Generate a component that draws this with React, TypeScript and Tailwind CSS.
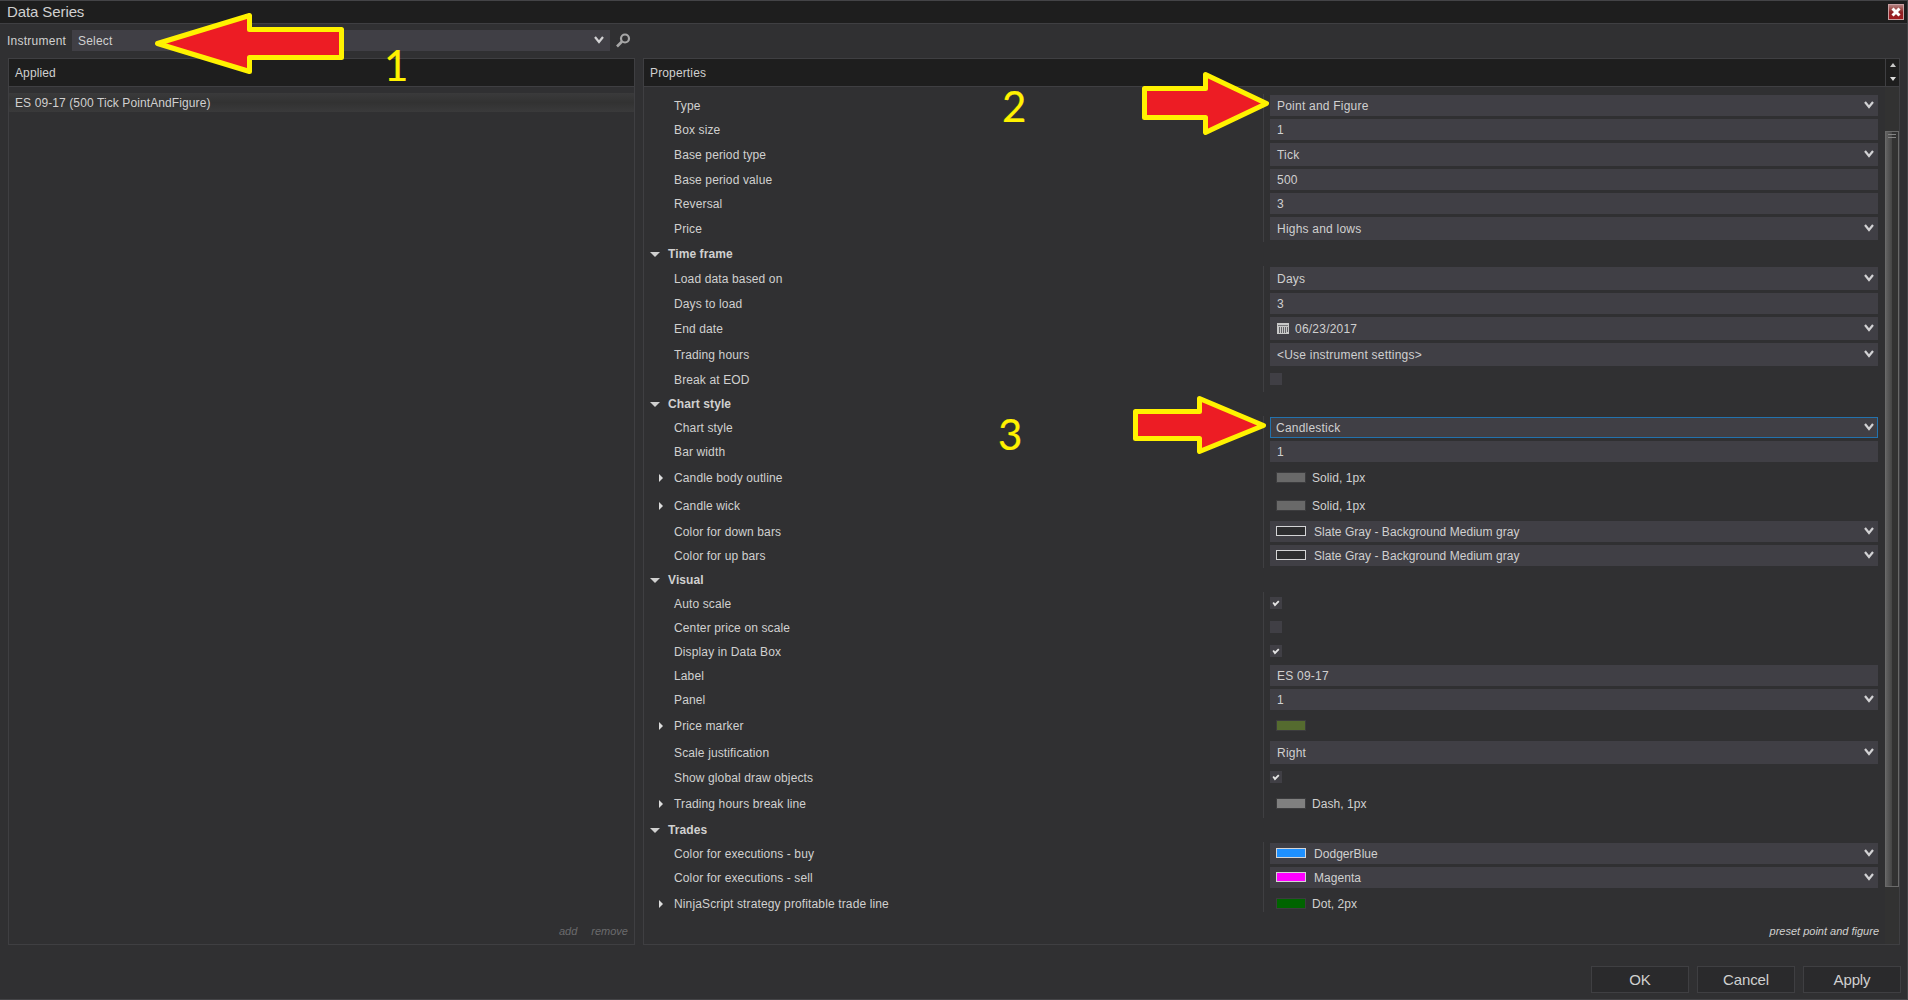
import type { ReactNode } from "react";

type RowKind = "select" | "input" | "check" | "swatch" | "group";

interface Row {
  kind: RowKind;
  label: string;
  h: string;
  value?: string;
  color?: string;
  checked?: boolean;
  focused?: boolean;
  icon?: boolean;
}

const rows: Row[] = [
  { kind: "select", label: "Type", h: "h-6", value: "Point and Figure" },
  { kind: "input", label: "Box size", h: "h-6", value: "1" },
  { kind: "select", label: "Base period type", h: "h-[26px]", value: "Tick" },
  { kind: "input", label: "Base period value", h: "h-6", value: "500" },
  { kind: "input", label: "Reversal", h: "h-6", value: "3" },
  { kind: "select", label: "Price", h: "h-[26px]", value: "Highs and lows" },
  { kind: "group", label: "Time frame", h: "h-6" },
  { kind: "select", label: "Load data based on", h: "h-[26px]", value: "Days" },
  { kind: "input", label: "Days to load", h: "h-6", value: "3" },
  { kind: "select", label: "End date", h: "h-[26px]", value: "06/23/2017", icon: true },
  { kind: "select", label: "Trading hours", h: "h-[26px]", value: "<Use instrument settings>" },
  { kind: "check", label: "Break at EOD", h: "h-6" },
  { kind: "group", label: "Chart style", h: "h-6" },
  { kind: "select", label: "Chart style", h: "h-6", value: "Candlestick", focused: true },
  { kind: "input", label: "Bar width", h: "h-6", value: "1" },
  { kind: "swatch", label: "Candle body outline", h: "h-7", value: "Solid, 1px", color: "bg-[#696969]" },
  { kind: "swatch", label: "Candle wick", h: "h-7", value: "Solid, 1px", color: "bg-[#696969]" },
  { kind: "select", label: "Color for down bars", h: "h-6", value: "Slate Gray - Background Medium gray", color: "bg-[#2d2d2f]" },
  { kind: "select", label: "Color for up bars", h: "h-6", value: "Slate Gray - Background Medium gray", color: "bg-[#2d2d2f]" },
  { kind: "group", label: "Visual", h: "h-6" },
  { kind: "check", label: "Auto scale", h: "h-6", checked: true },
  { kind: "check", label: "Center price on scale", h: "h-6" },
  { kind: "check", label: "Display in Data Box", h: "h-6", checked: true },
  { kind: "input", label: "Label", h: "h-6", value: "ES 09-17" },
  { kind: "select", label: "Panel", h: "h-6", value: "1" },
  { kind: "swatch", label: "Price marker", h: "h-7", color: "bg-[#556b2f]" },
  { kind: "select", label: "Scale justification", h: "h-[26px]", value: "Right" },
  { kind: "check", label: "Show global draw objects", h: "h-6", checked: true },
  { kind: "swatch", label: "Trading hours break line", h: "h-7", value: "Dash, 1px", color: "bg-[#808080]" },
  { kind: "group", label: "Trades", h: "h-6" },
  { kind: "select", label: "Color for executions - buy", h: "h-6", value: "DodgerBlue", color: "bg-[#1e90ff]" },
  { kind: "select", label: "Color for executions - sell", h: "h-6", value: "Magenta", color: "bg-[#ff00ff]" },
  { kind: "swatch", label: "NinjaScript strategy profitable trade line", h: "h-7", value: "Dot, 2px", color: "bg-[#006400]" },
];

function Chevron() {
  return (
    <svg className="mb-px shrink-0" width="10" height="8" viewBox="0 0 10 8" fill="none">
      <path d="M1 1 L5 6 L9 1" stroke="#d2d2d4" strokeWidth="2.2" />
    </svg>
  );
}

function Calendar() {
  return (
    <svg className="mr-1.5 shrink-0" width="12" height="11" viewBox="0 0 12 11" shapeRendering="crispEdges">
      <rect width="12" height="11" fill="#c8c8c8" />
      <rect x="1" y="2" width="10" height="1" fill="#77777a" />
      <path d="M2 4h1v6h-1zM4 4h1v6h-1zM6 4h1v6h-1zM8 4h1v6h-1zM10 4h1v5h-1z" fill="#626266" />
    </svg>
  );
}

function Value({ row }: { row: Row }) {
  if (row.kind === "check") {
    return (
      <div className="mt-[5px] flex h-3 w-3 items-center justify-center bg-[#403f45]">
        {row.checked && (
          <svg width="8" height="7" viewBox="0 0 8 7" fill="none">
            <path d="M1.2 2.4 L3 5 L6.8 1.2" stroke="#e4e4e4" strokeWidth="1.8" />
          </svg>
        )}
      </div>
    );
  }
  if (row.kind === "swatch") {
    return (
      <div className="flex h-7 items-center pl-[7px]">
        <div className={`mb-px h-[9px] w-7 outline-1 outline-[#3c3c3e] ${row.color}`} />
        <span className="ml-[7px] tracking-[0.05px]">{row.value}</span>
      </div>
    );
  }
  return (
    <div
      className={`mt-px mb-0.5 flex flex-1 items-center bg-[#403f45] pr-1 ${
        row.focused ? "pl-1.5 outline-1 -outline-offset-1 outline-[#2372ad]" : row.color ? "pl-1.5" : "pl-[7px]"
      }`}
    >
      {row.icon && <Calendar />}
      {row.color && <div className={`mr-2 mb-px h-2.5 w-[30px] border border-[#d4d4d6] ${row.color}`} />}
      <span className={row.color ? "flex-1 tracking-[0.04px]" : "flex-1 tracking-[0.22px]"}>{row.value}</span>
      {row.kind === "select" && <Chevron />}
    </div>
  );
}

function PropertyRow({ row }: { row: Row }) {
  if (row.kind === "group") {
    return (
      <div className={`flex shrink-0 items-center pl-1.5 font-bold ${row.h}`}>
        <svg width="10" height="5" viewBox="0 0 10 5">
          <path d="M0 0H10L5 5Z" fill="#d0d0d0" />
        </svg>
        <span className="ml-2">{row.label}</span>
      </div>
    );
  }
  return (
    <div className={`flex shrink-0 ${row.h}`}>
      <div className="flex w-[620px] items-center border-r border-[#3f3f42]">
        <div className="w-[30px] pl-[15px]">
          {row.kind === "swatch" && (
            <svg width="4" height="8" viewBox="0 0 4 8">
              <path d="M0 0L4 4L0 8Z" fill="#dcdcdc" />
            </svg>
          )}
        </div>
        <span className="tracking-[0.13px]">{row.label}</span>
      </div>
      <div className="ml-1.5 flex w-[608px] flex-col">
        <Value row={row} />
      </div>
    </div>
  );
}

function Button({ children }: { children: ReactNode }) {
  return (
    <button className="h-[27px] w-[98px] border border-[#3f3f42] bg-[#2a2a2c] text-[15px] leading-none tracking-[-0.1px]">
      {children}
    </button>
  );
}

function Annotations() {
  return (
    <svg className="pointer-events-none absolute -top-px left-0" width="1908" height="1000" viewBox="0 0 1908 1000">
      <g fill="#ed1c24" stroke="#fff200" strokeWidth="5" strokeLinejoin="round">
        <path d="M157.5 43.5L249.5 15.5V29.5H341.5V57.5H249.5V71.5Z" />
        <path d="M1144.5 88.5H1205.5V74.5L1266.5 103.5L1205.5 132.5V117.5H1144.5Z" />
        <path d="M1135.5 411.5H1199.5V398.5L1263.5 425.5L1199.5 451.5V438.5H1135.5Z" />
      </g>
      <g fill="#fff200" stroke="#fff200" strokeWidth="0.2" fontFamily="Lato, sans-serif" fontSize="42">
        <text x="384" y="80.5">1</text>
        <text x="1002" y="121.5">2</text>
        <text x="998" y="450">3</text>
      </g>
    </svg>
  );
}

export default function App() {
  return (
    <div className="relative flex h-[1000px] w-[1908px] flex-col overflow-hidden border border-l-0 border-[#444447] bg-[#303032] font-['Liberation_Sans',Arial,sans-serif] text-[12px] leading-none tracking-[0.1px] text-[#d0d0d0]">
      <header className="flex h-[23px] shrink-0 items-center justify-between border-b border-[#3f3f42] bg-[#1e1e1e] pr-[3px] pl-[7px]">
        <h1 className="mb-px text-[15px] tracking-[-0.1px]">Data Series</h1>
        <div className="flex h-4 w-4 items-center justify-center border border-[#c9a0a2] bg-linear-to-b from-[#b08080] via-[#8f2226] to-[#a01a1e]">
          <svg width="10" height="10" viewBox="0 0 10 10">
            <path d="M1.5 1.5L8.5 8.5M8.5 1.5L1.5 8.5" stroke="#fff" strokeWidth="3" />
          </svg>
        </div>
      </header>

      <div className="mt-1.5 flex h-[21px] shrink-0 items-center pl-[7px]">
        <span className="w-[65px] tracking-[0.25px]">Instrument</span>
        <div className="flex h-[21px] w-[538px] items-center justify-between bg-[#403f45] pr-1.5 pl-1.5">
          <span className="tracking-[0.18px]">Select</span>
          <Chevron />
        </div>
        <svg className="ml-1.5" width="15" height="15" viewBox="0 0 15 15" fill="none" stroke="#a6a6a6">
          <circle cx="9" cy="5.5" r="4" strokeWidth="2.2" />
          <path d="M6 8.5L1 13.5" strokeWidth="2.6" />
        </svg>
      </div>

      <main className="mt-[7px] flex h-[887px] shrink-0 gap-2 pl-2">
        <section className="flex w-[627px] flex-col border border-[#3f3f42]">
          <h2 className="flex h-7 shrink-0 items-center border-b border-[#3f3f42] bg-[#1e1e1e] pl-1.5">Applied</h2>
          <div className="mt-1.5 flex h-[19px] items-center bg-linear-to-b from-[#3a3a3b] via-[#323232] to-[#3a3a3b] pl-1.5">
            <span>ES 09-17 (500 Tick PointAndFigure)</span>
          </div>
          <div className="mt-auto mr-1.5 mb-[7px] flex justify-end gap-3.5 text-[11px] tracking-normal text-[#6b6b6d] italic">
            <span>add</span>
            <span>remove</span>
          </div>
        </section>

        <section className="flex w-[1257px] border border-[#3f3f42]">
          <div className="flex w-[1241px] flex-col">
            <h2 className="flex h-7 shrink-0 items-center border-b border-[#3f3f42] bg-[#1e1e1e] pl-1.5">
              <span className="tracking-[0.14px]">Properties</span>
            </h2>
            <div className="mt-[7px] flex h-[818px] shrink-0 flex-col overflow-hidden">
              {rows.map((row) => (
                <PropertyRow key={`${row.kind}-${row.label}`} row={row} />
              ))}
            </div>
            <div className="mt-auto mr-1.5 mb-[7px] text-right text-[11px] tracking-normal italic">
              preset point and figure
            </div>
          </div>
          <div className="flex w-3.5 flex-col bg-[#323232]">
            <div className="flex h-7 shrink-0 flex-col items-center justify-between border-b border-l border-[#3f3f42] bg-[#1e1e1e] pt-1 pb-[5px]">
              <svg width="6" height="4" viewBox="0 0 6 4">
                <path d="M3 0L6 4H0Z" fill="#c8c8c8" />
              </svg>
              <svg width="6" height="4" viewBox="0 0 6 4">
                <path d="M0 0H6L3 4Z" fill="#dcdcdc" />
              </svg>
            </div>
            <div className="mt-11 flex h-[756px] border border-[#6a6a6a]">
              <div className="w-1.5 bg-linear-to-r from-[#626262] to-[#454545]" />
              <div className="mt-0.5 -ml-1 h-1 w-2 border-y border-[#858585]" />
            </div>
          </div>
        </section>
      </main>

      <footer className="mt-[21px] mr-1.5 flex justify-end gap-2">
        <Button>OK</Button>
        <Button>Cancel</Button>
        <Button>Apply</Button>
      </footer>

      <Annotations />
    </div>
  );
}
